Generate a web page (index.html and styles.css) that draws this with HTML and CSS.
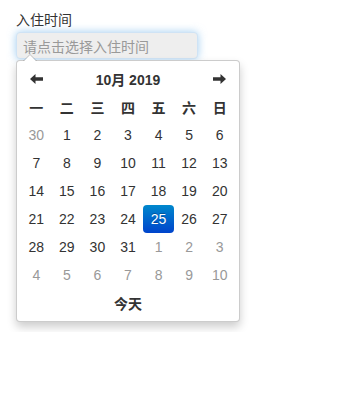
FILE: index.html
```html
<!DOCTYPE html>
<html>
<head>
<meta charset="utf-8">
<link rel="stylesheet" href="styles.css">
</head>
<body>
<div class="wrap">
  <div class="label">入住时间</div>
  <div class="input"><span class="ph">请点击选择入住时间</span></div>
  <div class="dropdown">
    <table class="cal">
      <tr class="head">
        <td class="nav"><svg width="13" height="10" viewBox="0 0 13 10"><path d="M0 5 L5.5 0 L5.5 3.3 L13 3.3 L13 6.7 L5.5 6.7 L5.5 10 Z" fill="#333"/></svg></td>
        <td class="title" colspan="5">10月 2019</td>
        <td class="nav"><svg width="13" height="10" viewBox="0 0 13 10"><path d="M13 5 L7.5 0 L7.5 3.3 L0 3.3 L0 6.7 L7.5 6.7 L7.5 10 Z" fill="#333"/></svg></td>
      </tr>
      <tr class="dows">
        <td>一</td><td>二</td><td>三</td><td>四</td><td>五</td><td>六</td><td>日</td>
      </tr>
      <tr><td class="old">30</td><td>1</td><td>2</td><td>3</td><td>4</td><td>5</td><td>6</td></tr>
      <tr><td>7</td><td>8</td><td>9</td><td>10</td><td>11</td><td>12</td><td>13</td></tr>
      <tr><td>14</td><td>15</td><td>16</td><td>17</td><td>18</td><td>19</td><td>20</td></tr>
      <tr><td>21</td><td>22</td><td>23</td><td>24</td><td class="active">25</td><td>26</td><td>27</td></tr>
      <tr><td>28</td><td>29</td><td>30</td><td>31</td><td class="old">1</td><td class="old">2</td><td class="old">3</td></tr>
      <tr><td class="old">4</td><td class="old">5</td><td class="old">6</td><td class="old">7</td><td class="old">8</td><td class="old">9</td><td class="old">10</td></tr>
      <tr><td class="today" colspan="7">今天</td></tr>
    </table>
  </div>
</div>
</body>
</html>
```
FILE: styles.css
```css
html, body {
  margin: 0;
  padding: 0;
  background: #fff;
}
body {
  font-family: "Liberation Sans", Arial, "Noto Sans CJK SC", sans-serif;
  font-size: 14px;
  color: #333;
}
.wrap {
  padding: 10px 16px;
}
.label {
  line-height: 20px;
  margin-bottom: 2px;
}
.input {
  box-sizing: border-box;
  width: 182px;
  height: 27px;
  padding: 0 6px;
  display: flex;
  align-items: center;
  background: #eee;
  border: 1px solid #cfe3f5;
  border-radius: 4px;
  box-shadow: 0 0 8px rgba(102, 175, 233, 0.6);
}
.ph {
  color: #999;
}
.dropdown {
  position: relative;
  box-sizing: border-box;
  width: 224px;
  margin-top: 1px;
  padding: 4px;
  background: #fff;
  border: 1px solid rgba(0, 0, 0, 0.2);
  border-radius: 4px;
  box-shadow: 0 5px 10px rgba(0, 0, 0, 0.2);
}
.dropdown::before {
  content: "";
  position: absolute;
  top: -7px;
  left: 6px;
  border-left: 7px solid transparent;
  border-right: 7px solid transparent;
  border-bottom: 7px solid rgba(0, 0, 0, 0.2);
}
.dropdown::after {
  content: "";
  position: absolute;
  top: -6px;
  left: 7px;
  border-left: 6px solid transparent;
  border-right: 6px solid transparent;
  border-bottom: 6px solid #fff;
}
.cal {
  width: 100%;
  table-layout: fixed;
  border-collapse: collapse;
  border-spacing: 0;
}
.cal td {
  height: 28px;
  padding: 0;
  text-align: center;
  vertical-align: middle;
  border-radius: 4px;
}
.nav svg {
  display: block;
  margin: 0 auto;
}
.title,
.dows td,
.today {
  font-weight: bold;
}
.old {
  color: #999;
}
.cal td.active {
  color: #fff;
  background: linear-gradient(to bottom, #0088cc, #0044cc);
  text-shadow: 0 -1px 0 rgba(0, 0, 0, 0.25);
}
```
